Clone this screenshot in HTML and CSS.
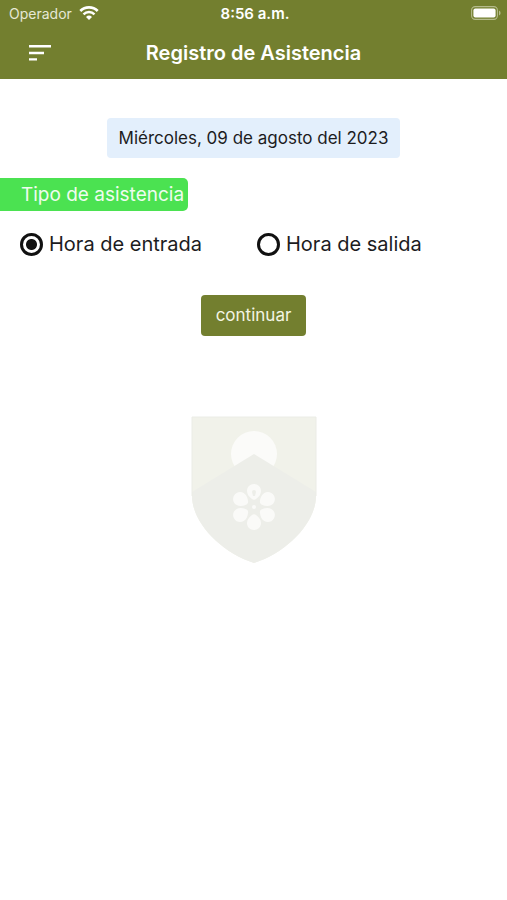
FILE: index.html
```html
<!DOCTYPE html>
<html lang="es">

<head>
    <meta charset="UTF-8">
    <meta name="viewport" content="width=device-width, initial-scale=1.0">
    <title>Registro de Asistencia</title>
    <link rel="stylesheet" href="styles.css">
</head>

<body>
    <header class="header">
        <div class="status-bar">
            <div class="carrier">
                <span>Operador</span>
                <svg width="20" height="14" viewBox="0 0 20 14" aria-hidden="true">
                    <path d="M1.3 5a12.3 12.3 0 0 1 17.4 0" fill="none" stroke="#fff" stroke-width="2.7" />
                    <path d="M4.5 8.3a7.8 7.8 0 0 1 11 0" fill="none" stroke="#fff" stroke-width="2.4" />
                    <path d="M10 14l-3-3.1a4.4 4.4 0 0 1 6 0z" fill="#fff" />
                </svg>
            </div>
            <span class="time">8:56 a.m.</span>
            <svg class="battery" width="30" height="14" viewBox="0 0 30 14" aria-hidden="true">
                <rect x=".6" y=".6" width="25.8" height="12.8" rx="3.6" fill="none" stroke="#b5bb8c" stroke-width="1.1" />
                <rect x="2.4" y="2.4" width="22.2" height="9.2" rx="2" fill="#fff" />
                <path d="M28 4.6a2.6 2.6 0 0 1 0 4.8z" fill="#b5bb8c" />
            </svg>
        </div>
        <div class="nav-bar">
            <button type="button" class="menu-button" aria-label="Menú">
                <svg width="22" height="16" viewBox="0 0 22 16" aria-hidden="true">
                    <path d="M0 1.3h22M0 8h15M0 14.4h8" fill="none" stroke="#fff" stroke-width="2.4" />
                </svg>
            </button>
            <h1>Registro de Asistencia</h1>
        </div>
    </header>

    <main>
        <form class="form">
            <p class="date">Miércoles, 09 de agosto del 2023</p>

            <h2 id="tipo">Tipo de asistencia</h2>
            <div class="form-radio" role="radiogroup" aria-labelledby="tipo">
                <div class="form-group">
                    <input type="radio" id="entrada" name="tipo" value="entrada" checked>
                    <label for="entrada">Hora de entrada</label>
                </div>
                <div class="form-group">
                    <input type="radio" id="salida" name="tipo" value="salida">
                    <label for="salida">Hora de salida</label>
                </div>
            </div>

            <button type="submit" class="submit">continuar</button>
        </form>

        <svg class="shield" width="126" height="148" viewBox="0 0 126 148" aria-hidden="true">
            <path d="M1 1h124v79c0 26-28 56-62 67C29 136 1 106 1 80z" fill="#f1f2ea" />
            <circle cx="63" cy="38" r="23" fill="#fbfbf9" />
            <path d="M63 38l62 38v4c0 26-28 56-62 67C29 136 1 106 1 80v-4z" fill="#edeee9" />
            <path d="M1 80V1h124v79" fill="none" stroke="#ebece6" />
            <!-- flower -->
            <g fill="#fafaf8">
                <g id="petals">
                    <path id="petal" d="M61 83c-3-2-5-5-5-8 0-4 3-7 7-7s7 3 7 7c0 3-2 6-5 8-1 1-3 1-4 0z" />
                    <use href="#petal" transform="rotate(60 63 91)" />
                    <use href="#petal" transform="rotate(120 63 91)" />
                </g>
                <use href="#petals" transform="rotate(180 63 91)" />
                <circle cx="63" cy="91" r="2" />
            </g>
            <path d="M62 80l-1-4a2 2 0 1 1 4 0l-1 4z" fill="#edeee9" />
        </svg>
    </main>

    <script>
        document.querySelector(".form").addEventListener("submit", (e) => {
            e.preventDefault();
        });
    </script>
</body>

</html>
```

FILE: styles.css
```css
* {
    padding: 0;
    margin: 0;
    box-sizing: border-box;
}

body {
    font-family: Inter, "Liberation Sans", sans-serif;
    background-color: white;
    color: #1c1c1e;
}

button {
    border: none;
    font-family: inherit;
    color: white;
    cursor: pointer;
}

svg {
    display: block;
}

.header {
    background-color: #737f2f;
    color: white;
}

.status-bar,
.nav-bar {
    display: grid;
    grid-template-columns: 1fr auto 1fr;
    align-items: center;
}

.status-bar {
    height: 26px;
    padding: 0 6px 0 9px;
    font-size: 14px;
}

.carrier {
    display: flex;
    align-items: center;
    gap: 7px;
    color: #e6e8d6;
}

.time {
    font-size: 15px;
    font-weight: 600;
}

.battery {
    justify-self: end;
}

.nav-bar {
    height: 53px;
    padding: 0 29px;
}

.menu-button {
    justify-self: start;
    background: none;
}

h1 {
    font-size: 20px;
    font-weight: 600;
}

.form {
    display: flex;
    flex-direction: column;
    align-items: center;
    padding-top: 39px;
}

.date {
    padding: 0 12px;
    border-radius: 4px;
    background-color: #e3effc;
    font-size: 17px;
    line-height: 40px;
}

h2 {
    align-self: flex-start;
    margin-top: 20px;
    padding: 0 4px 0 21px;
    border-radius: 0 5px 5px 0;
    background-color: #4be251;
    color: #effcef;
    font-size: 19px;
    font-weight: 400;
    line-height: 33px;
}

.form-radio {
    display: grid;
    grid-template-columns: 1fr 1fr;
    width: 100%;
    margin-top: 20px;
    padding: 0 13px 0 20px;
}

.form-group {
    display: flex;
    align-items: center;
    gap: 6px;
    font-size: 20px;
    line-height: 26px;
}

input[type="radio"] {
    appearance: none;
    flex: none;
    width: 23px;
    height: 23px;
    border: 3px solid #111;
    border-radius: 50%;
}

input[type="radio"]:checked {
    background: radial-gradient(circle, #111 5px, transparent 6px);
}

.submit {
    margin-top: 38px;
    padding: 0 15px;
    border-radius: 4px;
    background-color: #737f2f;
    color: #f3f5e4;
    font-size: 17px;
    line-height: 41px;
}

.shield {
    margin: 80px auto 0;
}
```
